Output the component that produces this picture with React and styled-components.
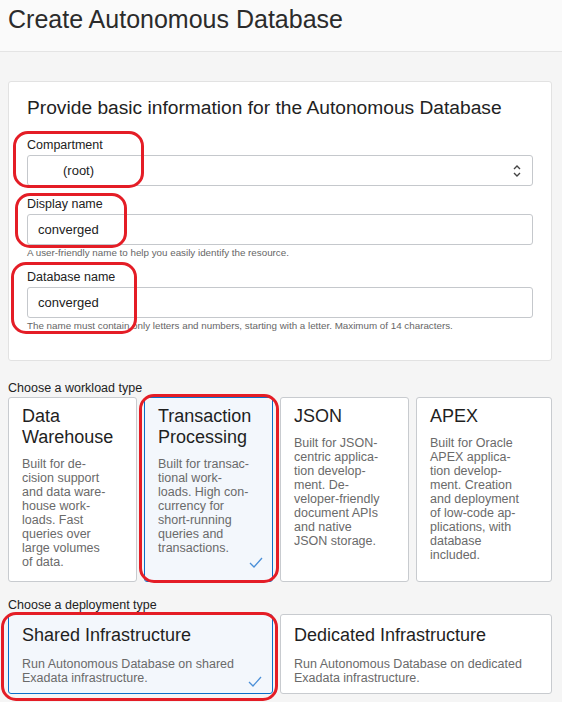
import React from 'react';
import styled, { createGlobalStyle } from 'styled-components';

const GlobalStyle = createGlobalStyle`
  html, body {
    margin: 0;
    padding: 0;
    background: #f5f5f5;
  }
  body {
    font-family: "Liberation Sans", Arial, sans-serif;
    color: #333;
  }
`;

const Page = styled.div`
  position: relative;
  width: 562px;
  min-height: 702px;
  overflow: hidden;
`;

const Header = styled.div`
  height: 52px;
  background: #fafafa;
  border-bottom: 1px solid #e4e4e4;
  padding: 4px 8px 0;
  box-sizing: border-box;
`;

const Title = styled.h1`
  margin: 0;
  font-size: 25px;
  line-height: 30px;
  font-weight: normal;
  color: #2b2b2b;
`;

const Content = styled.div`
  padding: 29px 10px 0 8px;
`;

const Panel = styled.div`
  background: #fff;
  border: 1px solid #e2e2e2;
  border-radius: 3px;
  padding: 14px 18px 28px;
`;

const PanelHeading = styled.h2`
  margin: 0 0 17px;
  font-size: 19.2px;
  line-height: 24px;
  font-weight: normal;
  color: #222;
`;

const Field = styled.div`
  display: flex;
  flex-direction: column;
  & + & {
    margin-top: 10px;
  }
`;

const Label = styled.label`
  font-size: 12.5px;
  line-height: 16px;
  color: #222;
  margin-bottom: 2px;
`;

const Box = styled.div`
  height: 31px;
  box-sizing: border-box;
  border: 1px solid #c5c8cc;
  border-radius: 3px;
  background: #fff;
  display: flex;
  align-items: center;
  justify-content: space-between;
  padding: 0 10px 0 ${p => p.$indent || 10}px;
  font-size: 13px;
  color: #222;
`;

const Help = styled.div`
  font-size: 9.8px;
  line-height: 12px;
  color: #666;
  margin-top: 2px;
`;

const SectionLabel = styled.div`
  font-size: 12.5px;
  line-height: 16px;
  color: #222;
  margin: ${p => p.$top}px 0 1px;
`;

const CardGrid = styled.div`
  display: grid;
  grid-template-columns: ${p => p.$cols};
  gap: 7px;
`;

const Card = styled.div`
  position: relative;
  background: ${p => (p.$selected ? '#f3f7fc' : '#fff')};
  border: 1px solid ${p => (p.$selected ? '#0a6fc9' : '#c8cbcf')};
  border-radius: 3px;
  padding: ${p => p.$padTop}px 13px ${p => p.$padBottom}px;
  min-height: ${p => p.$minH}px;
  box-sizing: border-box;
`;

const CardTitle = styled.div`
  font-size: 18px;
  line-height: 21px;
  color: #1f1f1f;
`;

const CardText = styled.div`
  margin-top: ${p => p.$gap}px;
  font-size: 12.5px;
  line-height: 14px;
  color: #6a6a6a;
`;

const Check = styled.svg`
  position: absolute;
  right: ${p => p.$right}px;
  bottom: ${p => p.$bottom}px;
  width: 14px;
  height: 11px;
`;

const Annotation = styled.div`
  position: absolute;
  left: ${p => p.$x}px;
  top: ${p => p.$y}px;
  width: ${p => p.$w}px;
  height: ${p => p.$h}px;
  border: 3px solid #e41d26;
  border-radius: 15px;
  box-sizing: border-box;
  pointer-events: none;
`;

const Chevrons = () => (
  <svg width="10" height="14" viewBox="0 0 10 14" fill="none" stroke="#444" strokeWidth="1.4">
    <path d="M2 5 L5 2 L8 5" />
    <path d="M2 9 L5 12 L8 9" />
  </svg>
);

const CheckMark = ({ right, bottom }) => (
  <Check $right={right} $bottom={bottom} viewBox="0 0 14 11" fill="none" stroke="#4a8fd8" strokeWidth="1.3">
    <path d="M1 6 L5 10 L13 1" />
  </Check>
);

const workloads = [
  {
    title: ['Data', 'Warehouse'],
    text: ['Built for de-', 'cision support', 'and data ware-', 'house work-', 'loads. Fast', 'queries over', 'large volumes', 'of data.'],
  },
  {
    title: ['Transaction', 'Processing'],
    text: ['Built for transac-', 'tional work-', 'loads. High con-', 'currency for', 'short-running', 'queries and', 'transactions.'],
    selected: true,
  },
  {
    title: ['JSON'],
    text: ['Built for JSON-', 'centric applica-', 'tion develop-', 'ment. De-', 'veloper-friendly', 'document APIs', 'and native', 'JSON storage.'],
  },
  {
    title: ['APEX'],
    text: ['Built for Oracle', 'APEX applica-', 'tion develop-', 'ment. Creation', 'and deployment', 'of low-code ap-', 'plications, with', 'database', 'included.'],
  },
];

const deployments = [
  {
    title: 'Shared Infrastructure',
    text: ['Run Autonomous Database on shared', 'Exadata infrastructure.'],
    selected: true,
  },
  {
    title: 'Dedicated Infrastructure',
    text: ['Run Autonomous Database on dedicated', 'Exadata infrastructure.'],
  },
];

const Lines = ({ lines }) =>
  lines.map((l, i) => (
    <React.Fragment key={i}>
      {l}
      {i < lines.length - 1 && <br />}
    </React.Fragment>
  ));

export default function App() {
  return (
    <Page>
      <GlobalStyle />
      <Header>
        <Title>Create Autonomous Database</Title>
      </Header>
      <Content>
        <Panel>
          <PanelHeading>Provide basic information for the Autonomous Database</PanelHeading>
          <Field>
            <Label>Compartment</Label>
            <Box $indent={35}>
              <span>(root)</span>
              <Chevrons />
            </Box>
          </Field>
          <Field>
            <Label>Display name</Label>
            <Box>converged</Box>
            <Help>A user-friendly name to help you easily identify the resource.</Help>
          </Field>
          <Field>
            <Label>Database name</Label>
            <Box>converged</Box>
            <Help>The name must contain only letters and numbers, starting with a letter. Maximum of 14 characters.</Help>
          </Field>
        </Panel>

        <SectionLabel $top={19}>Choose a workload type</SectionLabel>
        <CardGrid $cols="129px 129px 129px 1fr">
          {workloads.map((w, i) => (
            <Card key={i} $selected={w.selected} $padTop={8} $padBottom={12} $minH={184}>
              <CardTitle>
                <Lines lines={w.title} />
              </CardTitle>
              <CardText $gap={9}>
                <Lines lines={w.text} />
              </CardText>
              {w.selected && <CheckMark right={9} bottom={13} />}
            </Card>
          ))}
        </CardGrid>

        <SectionLabel $top={15}>Choose a deployment type</SectionLabel>
        <CardGrid $cols="265px 1fr">
          {deployments.map((d, i) => (
            <Card key={i} $selected={d.selected} $padTop={10} $padBottom={6} $minH={80}>
              <CardTitle>{d.title}</CardTitle>
              <CardText $gap={11}>
                <Lines lines={d.text} />
              </CardText>
              {d.selected && <CheckMark right={10} bottom={6} />}
            </Card>
          ))}
        </CardGrid>
      </Content>

      <Annotation $x={13} $y={131} $w={131} $h={57} />
      <Annotation $x={15} $y={193} $w={112} $h={55} />
      <Annotation $x={11} $y={262} $w={126} $h={72} />
      <Annotation $x={139} $y={394} $w={140} $h={189} />
      <Annotation $x={1} $y={612} $w={277} $h={89} />
    </Page>
  );
}
